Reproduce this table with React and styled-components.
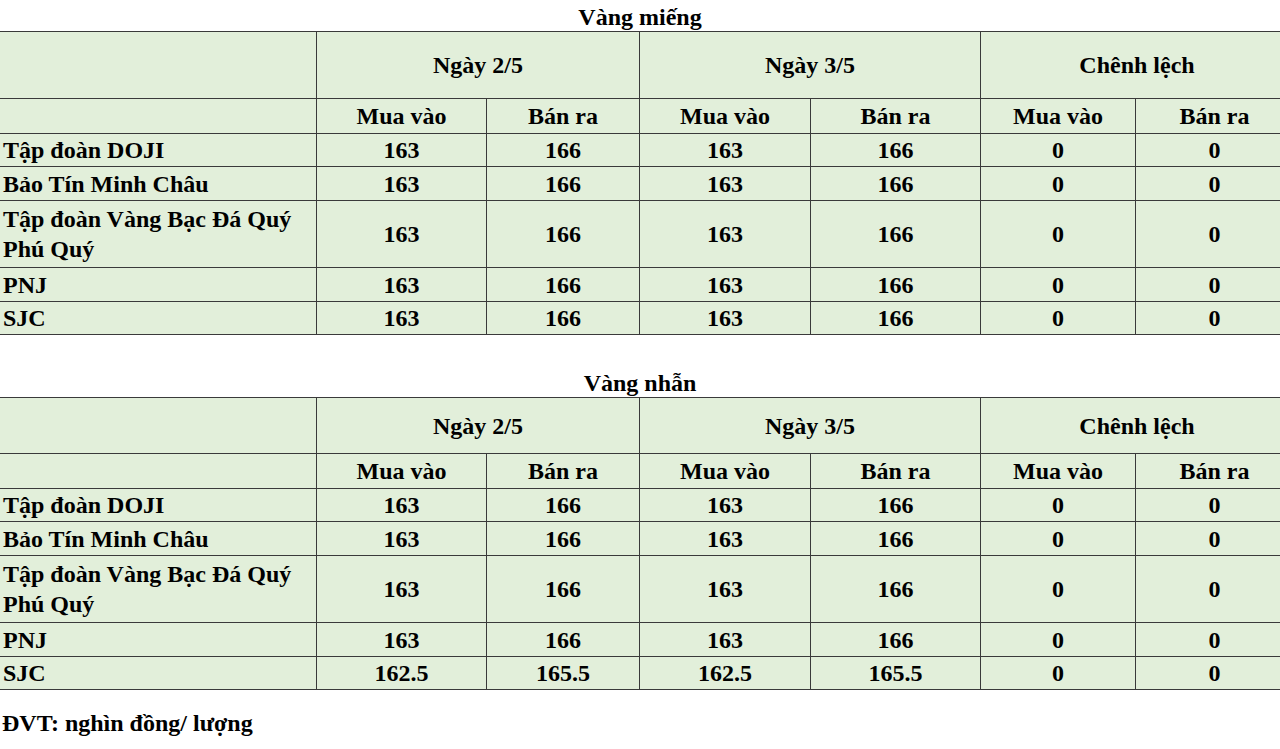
import React from 'react'
import styled, { createGlobalStyle } from 'styled-components'

const GlobalStyle = createGlobalStyle`
  html, body {
    margin: 0;
    padding: 0;
    background: #fff;
  }
  body {
    font-family: "Liberation Serif", "Times New Roman", serif;
    color: #000;
    overflow: hidden;
  }
`

const Page = styled.div`
  width: 1280px;
  overflow: hidden;
  display: flex;
  flex-direction: column;
`

const Section = styled.section`
  margin-top: ${p => p.$gap || 0}px;
`

const Caption = styled.div`
  height: 31px;
  line-height: 34px;
  text-align: center;
  font-size: 24px;
  font-weight: bold;
`

const Table = styled.table`
  width: 1294px;
  border-collapse: collapse;
  table-layout: fixed;
  background: #e2efda;
  font-size: 24px;
  font-weight: bold;
  margin-left: -1px;
`

const Row = styled.tr`
  height: ${p => p.$h}px;
`

const Cell = styled.td`
  border: 1px solid #3a3a3a;
  padding: 0 3px;
  line-height: 30px;
  vertical-align: middle;
  text-align: ${p => (p.$left ? 'left' : 'center')};
`

const Footer = styled.div`
  margin-top: 20px;
  padding-left: 2px;
  font-size: 24px;
  font-weight: bold;
`

const widths = [317, 170, 153, 171, 170, 155, 158]

const companies = [
  { name: 'Tập đoàn DOJI', h: 33 },
  { name: 'Bảo Tín Minh Châu', h: 34 },
  { name: 'Tập đoàn Vàng Bạc Đá Quý Phú Quý', h: 67, two: true },
  { name: 'PNJ', h: 34 },
  { name: 'SJC', h: 33 },
]

function PriceTable({ title, headH, values, gap }) {
  return (
    <Section $gap={gap}>
      <Caption>{title}</Caption>
      <Table>
        <colgroup>
          {widths.map((w, i) => (
            <col key={i} style={{ width: w }} />
          ))}
        </colgroup>
        <tbody>
          <Row $h={headH}>
            <Cell />
            <Cell colSpan={2}>Ngày 2/5</Cell>
            <Cell colSpan={2}>Ngày 3/5</Cell>
            <Cell colSpan={2}>Chênh lệch</Cell>
          </Row>
          <Row $h={35}>
            <Cell />
            <Cell>Mua vào</Cell>
            <Cell>Bán ra</Cell>
            <Cell>Mua vào</Cell>
            <Cell>Bán ra</Cell>
            <Cell>Mua vào</Cell>
            <Cell>Bán ra</Cell>
          </Row>
          {companies.map((c, i) => (
            <Row key={c.name} $h={c.h}>
              <Cell $left>
                {c.two ? (
                  <>
                    Tập đoàn Vàng Bạc Đá Quý
                    <br />
                    Phú Quý
                  </>
                ) : (
                  c.name
                )}
              </Cell>
              {values[i].map((v, j) => (
                <Cell key={j}>{v}</Cell>
              ))}
            </Row>
          ))}
        </tbody>
      </Table>
    </Section>
  )
}

const std = ['163', '166', '163', '166', '0', '0']

const mieng = [std, std, std, std, std]
const nhan = [std, std, std, std, ['162.5', '165.5', '162.5', '165.5', '0', '0']]

export default function App() {
  return (
    <>
      <GlobalStyle />
      <Page>
        <PriceTable title="Vàng miếng" headH={67} values={mieng} />
        <PriceTable title="Vàng nhẫn" headH={56} values={nhan} gap={31} />
        <Footer>ĐVT: nghìn đồng/ lượng</Footer>
      </Page>
    </>
  )
}
